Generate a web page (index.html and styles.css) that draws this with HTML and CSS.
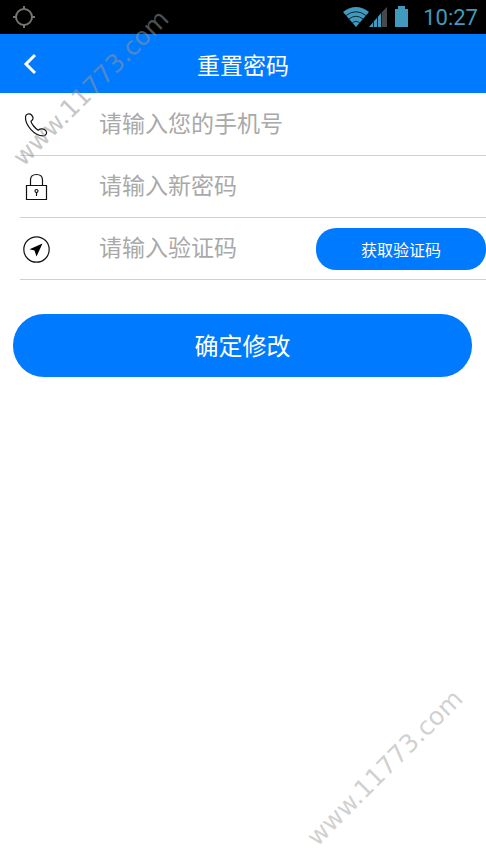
FILE: index.html
```html
<!DOCTYPE html>
<html lang="zh-CN">
<head>
<meta charset="utf-8">
<meta name="viewport" content="width=device-width, initial-scale=1">
<title>重置密码</title>
<link rel="stylesheet" href="styles.css">
</head>
<body>
<div class="status">
  <svg class="status-location" width="24" height="24" viewBox="0 0 24 24" fill="none" stroke="#77736f" stroke-width="2" aria-hidden="true">
    <circle cx="12" cy="12" r="8"/>
    <path d="M12 1v4M12 19v4M1 12h4M19 12h4"/>
  </svg>
  <svg class="status-signals" width="66" height="24" viewBox="0 0 66 24" aria-hidden="true">
    <path d="M0 7Q13-3 26 7L13 22Z" fill="#4199bd"/>
    <path d="M3 10.500Q13 3 23 10.500M6 14Q13 8.500 20 14M9.500 17.500Q13 15 16.500 17.500" fill="none" stroke="#0b2a38" stroke-width="1"/>
    <path d="M39 7L44 2V22H39Z" fill="#484848"/>
    <path d="M26 22L39 7V22Z" fill="#4199bd"/>
    <path d="M30.500 17v5M34.500 12v10M38.500 7v15" stroke="#06202b" stroke-width="1"/>
    <path d="M52 4h3V1h7v3h3v18H52Z" fill="#4199bd"/>
  </svg>
  <span class="clock">10:27</span>
</div>
<header class="header">
  <button class="back" type="button" aria-label="返回">
    <svg width="16" height="24" viewBox="0 0 16 24" fill="none" stroke="#fff" stroke-width="3" aria-hidden="true"><path d="M13 3L4 12L13 21"/></svg>
  </button>
  <h1 class="title">重置密码</h1>
</header>
<form class="form">
  <div class="row">
    <label class="icon" for="phone" aria-label="手机号">
      <svg width="32" height="32" viewBox="0 0 32 32" fill="none" stroke="#111" stroke-width="1.200" stroke-linejoin="round" aria-hidden="true">
        <path d="M5.500 8C5.500 5 9.500 3.800 11.500 6C13.800 8.500 13.500 10.500 11 12.200C11 14.500 15.500 19.700 18.200 21.200C20.500 19.300 24 19.500 26 21.800C27.500 24 26 26.500 23.500 26.800C14 27 5 15.500 5.500 8Z"/>
      </svg>
    </label>
    <input class="field" id="phone" type="tel" placeholder="请输入您的手机号">
  </div>
  <div class="row">
    <label class="icon" for="password" aria-label="新密码">
      <svg width="32" height="32" viewBox="0 0 32 32" fill="none" stroke="#111" stroke-width="1.200" aria-hidden="true">
        <path d="M6.500 14.500h20v14h-20zM10.500 14.500V9Q10.500 3.500 16.500 3.500T22.500 9V14.500"/>
        <circle cx="16.500" cy="20" r="1.500"/>
        <path d="M16.500 21.500v3.500"/>
      </svg>
    </label>
    <input class="field" id="password" type="password" placeholder="请输入新密码">
  </div>
  <div class="row">
    <label class="icon" for="code" aria-label="验证码">
      <svg width="32" height="32" viewBox="0 0 32 32" aria-hidden="true">
        <circle cx="16.500" cy="16.500" r="12.700" fill="none" stroke="#111" stroke-width="1.200"/>
        <path d="M22.500 10.500L9.500 16.200L14.500 17.500L16.500 23.500Z" fill="#000"/>
      </svg>
    </label>
    <input class="field" id="code" type="text" placeholder="请输入验证码">
    <button class="get-code" type="button">获取验证码</button>
  </div>
  <button class="submit" type="submit">确定修改</button>
</form>
<div class="watermark watermark-top" aria-hidden="true">www.11773.com</div>
<div class="watermark watermark-bottom" aria-hidden="true">www.11773.com</div>
</body>
</html>
```
FILE: styles.css
```css
* {
  box-sizing: border-box;
}

body {
  position: relative;
  min-height: 100vh;
  margin: 0;
  overflow-x: hidden;
  background: #fff;
  font-family: "Noto Sans CJK SC", sans-serif;
}

button,
input {
  margin: 0;
  padding: 0;
  border: 0;
  font-family: inherit;
}

.status {
  display: flex;
  align-items: center;
  height: 34px;
  padding: 0 8px 0 12px;
  background: #000;
}

.status-signals {
  margin-left: auto;
}

.clock {
  margin-left: 14px;
  color: #4199bd;
  font: 22px/32px Roboto, sans-serif;
  padding-top: 2px;
}

.header {
  display: grid;
  grid-template-columns: 60px 1fr 60px;
  align-items: center;
  height: 59px;
  background: #007aff;
}

.back {
  display: flex;
  align-items: center;
  height: 59px;
  padding-left: 22px;
  background: none;
}

.title {
  margin: 0;
  color: #fff;
  font-size: 23px;
  font-weight: 400;
  line-height: 58px;
  text-align: center;
}

.form {
  padding-top: 1px;
}

.row {
  display: flex;
  align-items: center;
  height: 62px;
  margin-left: 20px;
  border-bottom: 1px solid #d0d0d0;
}

.icon {
  display: flex;
  width: 79px;
}

.field {
  flex: 1;
  min-width: 0;
  height: 60px;
  padding-bottom: 5px;
  outline: 0;
  background: none;
  color: #333;
  font-size: 23px;
}

.field::placeholder {
  color: #a9a9a9;
  opacity: 1;
}

.get-code {
  width: 170px;
  height: 42px;
  border-radius: 20px;
  background: #007aff;
  color: #fff;
  font-size: 16px;
}

.submit {
  display: block;
  width: calc(100% - 27px);
  height: 63px;
  margin: 34px 14px 0 13px;
  padding-bottom: 2px;
  border-radius: 31px;
  background: #007aff;
  color: #fff;
  font-size: 24px;
}

.watermark {
  position: absolute;
  color: rgba(150, 150, 150, 0.45);
  font: 25px/30px "DejaVu Sans", sans-serif;
  white-space: nowrap;
  pointer-events: none;
  transform: translate(-50%, -50%) rotate(-45deg);
}

.watermark-top {
  top: 88px;
  left: 91px;
  color: rgba(150, 150, 150, 0.55);
}

.watermark-bottom {
  top: 768px;
  left: 385px;
}
```
